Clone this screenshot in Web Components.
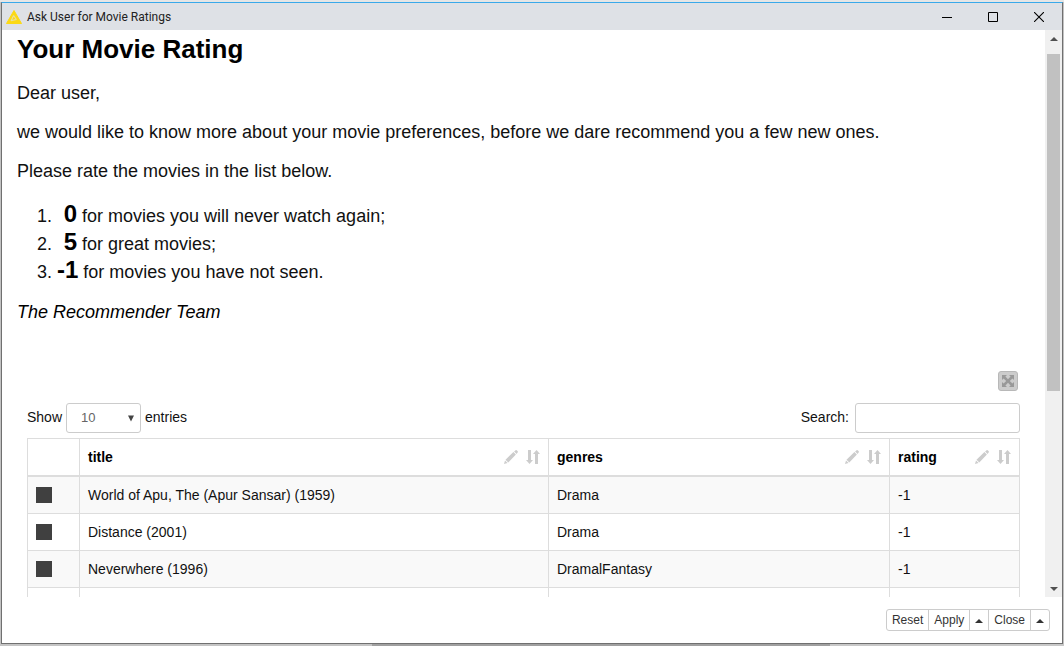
<!DOCTYPE html>
<html lang="en">
<head>
<meta charset="utf-8">
<title>Ask User for Movie Ratings</title>
<style>
html, body { margin: 0; height: 100%; }
body { font-family: "Liberation Sans", Arial, sans-serif; font-size: 14px; color: #111; }
</style>
</head>
<body>
<dialog-window>
  <title-bar slot="title">Ask User for Movie Ratings</title-bar>
  <rating-letter></rating-letter>
  <movie-table></movie-table>
  <scroll-rail slot="rail"></scroll-rail>
  <action-bar slot="actions"></action-bar>
</dialog-window>

<script>
class BaseElement extends HTMLElement {
  connectedCallback() {
    if (this.shadowRoot) return;
    this.attachShadow({ mode: 'open' }).innerHTML = this.constructor.markup;
    this.ready();
  }
  ready() {}
}

customElements.define('dialog-window', class extends BaseElement {
  static markup = `
    <style>
      :host { display: flex; box-sizing: border-box; height: 100vh; padding: 2px 1px;
        background: linear-gradient(#e6e6e6 0 2px, transparent 2px),
          linear-gradient(90deg, #c4c4c4 0 35%, #a0a0a0 35% 78%, #c8c8c8 78%) bottom / 100% 2px no-repeat, #c2c2c2; }
      .window { flex: 1; min-width: 0; display: flex; flex-direction: column; background: #fff;
        border: 1px solid #707070; border-top-color: #3aa9ea; }
      .body { flex: 1; min-height: 0; display: flex; }
      .view { flex: 1; min-width: 0; overflow: hidden; }
    </style>
    <div class="window">
      <slot name="title"></slot>
      <div class="body"><main class="view"><slot></slot></main><slot name="rail"></slot></div>
      <slot name="actions"></slot>
    </div>`;
});

customElements.define('title-bar', class extends BaseElement {
  static markup = `
    <style>
      :host { display: flex; align-items: center; height: 27px; flex: none; background: #dee1e6;
        font: 12px/16px Roboto, "Open Sans", sans-serif; color: #222; }
      .logo { margin: 0 5px 0 4px; flex: none; }
      .name { flex: 1; }
      button { width: 46px; height: 27px; padding: 0; border: 0; background: none; display: grid; place-items: center; }
    </style>
    <svg class="logo" width="16" height="16" viewBox="0 0 16 16" aria-hidden="true">
      <path d="M8 1.5 L15.5 14.5 H.5 Z" fill="#fbd914" stroke="#fbd914" stroke-linejoin="round"/>
      <path d="M7.6 6.5 L5 12 M7.6 6.5 L10 10 M5 11.8 L10.6 10.4" stroke="#e9dfa0" stroke-width="1.1" fill="none"/>
    </svg>
    <span class="name"><slot></slot></span>
    <button aria-label="Minimize"><svg width="10" height="10"><path d="M0 5.5H10" stroke="#000"/></svg></button>
    <button aria-label="Maximize"><svg width="10" height="10"><path d="M.5 .5H9.5V9.5H.5Z" fill="none" stroke="#000"/></svg></button>
    <button aria-label="Close window"><svg width="10" height="10"><path d="M0 0L10 10M10 0L0 10" stroke="#000" stroke-width="1.1"/></svg></button>`;
});

customElements.define('rating-letter', class extends BaseElement {
  static markup = `
    <style>
      :host { display: block; padding: 4px 15px 0; font-size: 18px; line-height: 21px; color: #111; }
      h1 { margin: 0 0 19px; font-size: 26px; line-height: 30px; color: #000; }
      p { margin: 18px 0; }
      ol { margin: 20px 0 16px; padding-left: 40px; }
      ol + p { margin-top: 16px; }
      li { line-height: 28px; }
      strong { font-size: 24px; line-height: 20px; color: #000; }
      .team { color: #000; }
    </style>
    <h1>Your Movie Rating</h1>
    <p>Dear user,</p>
    <p>we would like to know more about your movie preferences, before we dare recommend you a few new ones.</p>
    <p>Please rate the movies in the list below.</p>
    <ol>
      <li><strong>&nbsp;0</strong> for movies you will never watch again;</li>
      <li><strong>&nbsp;5</strong> for great movies;</li>
      <li><strong>-1</strong> for movies you have not seen.</li>
    </ol>
    <p class="team"><em>The Recommender Team</em></p>`;
});

customElements.define('column-tools', class extends BaseElement {
  static markup = `
    <style>
      :host { display: flex; gap: 8px; align-items: center; }
      svg { display: block; fill: #ccc; }
    </style>
    <svg width="14" height="14" viewBox="0 0 14 14" aria-hidden="true">
      <path d="M0 14 L1 10.4 L3.6 13 Z M1.5 9.7 L9.4 2.1 L11.9 4.6 L4.3 12.5 Z M10.1 1.4 L11.6 .2 Q12.2 -.1 12.7 .3 L13.7 1.3 Q14.1 1.8 13.8 2.3 L12.6 3.9 Z"/>
    </svg>
    <svg width="14" height="14" viewBox="0 0 14 14" aria-hidden="true">
      <path d="M2 0H5V10H7L3.5 14L0 10H2Z M9 14H12V4H14L10.5 0L7 4H9Z"/>
    </svg>`;
});

customElements.define('movie-table', class extends BaseElement {
  static markup = `
    <style>
      :host { display: flex; flex-direction: column; margin-top: 48px; padding: 0 25px; line-height: 20px; color: #111; }
      .expand { align-self: flex-end; width: 20px; height: 20px; margin-right: 2px; padding: 0; display: grid; place-items: center;
        background: #ccc; border: 1px solid #b8b8b8; border-radius: 3px; }
      .controls { display: flex; justify-content: space-between; margin: 12px 0 5px; }
      label { display: flex; align-items: center; gap: 4px; height: 30px; }
      .search { gap: 6px; }
      .text { margin-top: -2px; }
      select, input { box-sizing: border-box; height: 30px; border: 1px solid #ccc; border-radius: 3px; background: #fff;
        font: 13px/18px "Liberation Sans", Arial, sans-serif; color: #666; outline: 0; }
      .pick { display: grid; align-items: center; }
      .pick > * { grid-area: 1 / 1; }
      .pick svg { justify-self: end; margin-right: 7px; pointer-events: none; }
      select { appearance: none; width: 75px; padding: 0 14px; }
      input { width: 165px; padding: 0 10px; }
      table { width: 100%; table-layout: fixed; border-collapse: separate; border-spacing: 0;
        border: solid #ddd; border-width: 1px 0 0 1px; }
      th, td { box-sizing: border-box; height: 37px; padding: 0 8px; border: solid #ddd; border-width: 0 1px 1px 0; text-align: left; }
      th { height: 38px; border-bottom-width: 2px; color: #000; }
      .head { display: flex; justify-content: space-between; align-items: center; }
      tbody tr:nth-child(odd) { background: #f9f9f9; }
      td svg { display: block; }
      .c1 { width: 52px; } .c2 { width: 469px; } .c4 { width: 130px; }
    </style>
    <button class="expand" aria-label="Expand view">
      <svg width="12" height="12" viewBox="0 0 12 12"><path fill="#999" d="M0 0H5L3.4 1.6L6 4.2L8.6 1.6L7 0H12V5L10.4 3.4L7.8 6L10.4 8.6L12 7V12H7L8.6 10.4L6 7.8L3.4 10.4L5 12H0V7L1.6 8.6L4.2 6L1.6 3.4L0 5Z"/></svg>
    </button>
    <div class="controls">
      <label for="length"><span class="text">Show</span>
        <span class="pick"><select id="length"><option>10</option><option>25</option><option>50</option></select>
        <svg width="6" height="7" aria-hidden="true"><path d="M0 .5H6L3 6.5Z" fill="#444"/></svg></span>
        <span class="text">entries</span></label>
      <label class="search" for="search"><span class="text">Search:</span><input id="search" type="text"></label>
    </div>
    <table>
      <colgroup><col class="c1"><col class="c2"><col><col class="c4"></colgroup>
      <thead><tr><th></th>
        <th><div class="head">title<column-tools></column-tools></div></th>
        <th><div class="head">genres<column-tools></column-tools></div></th>
        <th><div class="head">rating<column-tools></column-tools></div></th></tr></thead>
      <tbody></tbody>
    </table>`;
  ready() {
    const movies = [
      ['World of Apu, The (Apur Sansar) (1959)', 'Drama', '-1'],
      ['Distance (2001)', 'Drama', '-1'],
      ['Neverwhere (1996)', 'DramalFantasy', '-1'],
      ['', '', '']
    ];
    const swatch = '<svg width="16" height="16" aria-hidden="true"><rect width="16" height="16" fill="#404040"/></svg>';
    this.shadowRoot.querySelector('tbody').innerHTML = movies.map(([title, genres, rating]) =>
      `<tr><td>${title && swatch}</td><td>${title}</td><td>${genres}</td><td>${rating}</td></tr>`).join('');
  }
});

customElements.define('scroll-rail', class extends BaseElement {
  static markup = `
    <style>
      :host { display: flex; flex-direction: column; flex: none; width: 17px; background: #f0f0f0; }
      .end { height: 17px; display: grid; place-items: center; flex: none; }
      .track { flex: 1; padding: 7px 2px 0; }
      .thumb { height: 64%; background: #c1c1c1; }
    </style>
    <div class="end"><svg width="8" height="4"><path d="M4 0L8 4H0Z" fill="#505050"/></svg></div>
    <div class="track"><div class="thumb"></div></div>
    <div class="end"><svg width="8" height="4"><path d="M4 4L8 0H0Z" fill="#505050"/></svg></div>`;
});

customElements.define('action-bar', class extends BaseElement {
  static markup = `
    <style>
      :host { display: flex; justify-content: flex-end; flex: none; padding: 12px; }
      .group { display: flex; border: 1px solid #ccc; border-radius: 3px; }
      button { height: 20px; padding: 0 5px; border: 0; border-left: 1px solid #ccc; background: none;
        font: 12px/18px "Liberation Sans", Arial, sans-serif; color: #333; }
      button:first-child { border-left: 0; }
      svg { display: block; margin-top: 2px; }
    </style>
    <div class="group">
      <button>Reset</button><button>Apply</button>
      <button aria-label="Apply options"><svg width="8" height="4"><path d="M4 0L8 4H0Z" fill="#333"/></svg></button>
      <button>Close</button>
      <button aria-label="Close options"><svg width="8" height="4"><path d="M4 0L8 4H0Z" fill="#333"/></svg></button>
    </div>`;
});
</script>
</body>
</html>
